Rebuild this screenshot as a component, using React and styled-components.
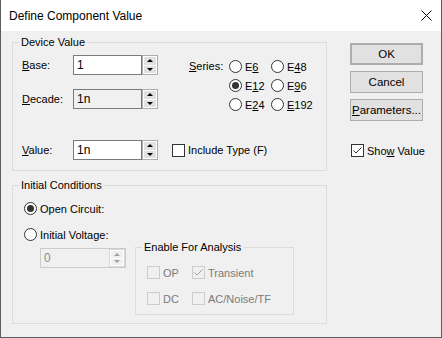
import React from 'react';
import styled, { createGlobalStyle } from 'styled-components';

const GlobalStyle = createGlobalStyle`
  html, body {
    margin: 0;
    padding: 0;
    background: #ffffff;
  }
  body {
    font-family: "Liberation Sans", Arial, sans-serif;
    font-size: 11px;
    color: #000;
  }
`;

const Window = styled.div`
  width: 442px;
  height: 338px;
  box-sizing: border-box;
  border: 1px solid #5e5e5e;
  border-top: none;
  background: #f0f0f0;
  display: flex;
  flex-direction: column;
`;

const TitleBar = styled.div`
  height: 31px;
  flex: none;
  background: #ffffff;
  display: flex;
  align-items: center;
  justify-content: space-between;
  padding: 0 9px 0 8px;
  font-size: 12px;
`;

const Body = styled.div`
  flex: 1;
  display: flex;
`;

const LeftColumn = styled.div`
  width: 315px;
  margin-left: 11px;
  padding-top: 4px;
  display: flex;
  flex-direction: column;
  gap: 7px;
`;

const RightColumn = styled.div`
  width: 73px;
  margin-left: 23px;
  padding-top: 12px;
  display: flex;
  flex-direction: column;
  gap: 6px;
`;

const GroupBox = styled.fieldset`
  margin: 0;
  padding: 0;
  min-width: 0;
  border: 1px solid #dcdcdc;
  box-sizing: border-box;
  height: ${(p) => p.$h}px;
  width: ${(p) => (p.$w ? `${p.$w}px` : 'auto')};
`;

const Legend = styled.legend`
  margin-left: 6px;
  padding: 0 2px;
  line-height: 14px;
  font-size: 11px;
  color: #000;
`;

const DeviceInner = styled.div`
  padding: 6px 0 0 9px;
  display: flex;
  flex-direction: column;
`;

const TopArea = styled.div`
  display: flex;
`;

const FieldStack = styled.div`
  display: flex;
  flex-direction: column;
  gap: 14px;
`;

const Row = styled.div`
  display: flex;
  align-items: center;
  height: 20px;
  margin-top: ${(p) => p.$mt || 0}px;
`;

const Label = styled.span`
  width: ${(p) => p.$w || 51}px;
  flex: none;
`;

const Indent = styled.span`
  width: 16px;
  flex: none;
`;

const Field = styled.div`
  display: flex;
  height: 20px;
  box-sizing: border-box;
  border: ${(p) => (p.$disabled ? '1px solid #cccccc' : 'none')};
  width: ${(p) => (p.$disabled ? '86px' : 'auto')};
`;

const Input = styled.input`
  width: ${(p) => (p.$disabled ? 68 : 69)}px;
  height: ${(p) => (p.$disabled ? 18 : 20)}px;
  box-sizing: border-box;
  margin: 0;
  padding: 0 3px;
  border: ${(p) => (p.$disabled ? 'none' : '1px solid #7a7a7a')};
  background: ${(p) => (p.$grey ? '#f0f0f0' : '#ffffff')};
  font-family: "Liberation Sans", Arial, sans-serif;
  font-size: 12px;
  color: ${(p) => (p.$disabled ? '#8a8a8a' : '#000')};
  outline: none;
`;

const Spinner = styled.div`
  width: 16px;
  height: ${(p) => (p.$disabled ? 18 : 20)}px;
  box-sizing: border-box;
  border: 1px solid ${(p) => (p.$disabled ? '#d6d6d6' : '#adadad')};
  background: #ffffff;
  padding: 1px;
  display: flex;
  flex-direction: column;
  gap: 1px;
`;

const SpinButton = styled.div`
  flex: 1;
  background: ${(p) => (p.$disabled ? '#f0f0f0' : '#e1e1e1')};
  display: flex;
  align-items: center;
  justify-content: center;
`;

const Arrow = styled.span`
  width: 0;
  height: 0;
  border-left: 3px solid transparent;
  border-right: 3px solid transparent;
  border-${(p) => (p.$down ? 'top' : 'bottom')}: 3px solid ${(p) => (p.$disabled ? '#a0a0a0' : '#000')};
`;

const SeriesBlock = styled.div`
  display: flex;
  margin-left: 31px;
  padding-top: 2px;
`;

const SeriesLabel = styled.span`
  width: 40px;
  line-height: 19px;
`;

const RadioGrid = styled.div`
  display: grid;
  grid-template-columns: 42px auto;
  grid-auto-rows: 19px;
`;

const Option = styled.label`
  display: flex;
  align-items: center;
  gap: 3px;
  height: ${(p) => p.$h || 19}px;
  color: ${(p) => (p.$disabled ? '#7a7a7a' : '#000')};
  margin-left: ${(p) => p.$ml || 0}px;
  margin-top: ${(p) => p.$mt || 0}px;
  white-space: nowrap;
`;

const Box = styled.span`
  width: 13px;
  height: 13px;
  flex: none;
  box-sizing: border-box;
  border: 1px solid ${(p) => (p.$disabled ? '#cccccc' : '#333333')};
  background: ${(p) => (p.$disabled ? '#f0f0f0' : '#ffffff')};
  border-radius: ${(p) => (p.$round ? '50%' : '0')};
  display: flex;
  align-items: center;
  justify-content: center;
`;

const Dot = styled.span`
  width: 7px;
  height: 7px;
  border-radius: 50%;
  background: #333333;
`;

const Button = styled.button`
  width: 73px;
  height: 22px;
  box-sizing: border-box;
  margin: 0;
  padding: 0;
  background: #e1e1e1;
  border: ${(p) => (p.$default ? '2px solid #adadad' : '1px solid #adadad')};
  font-family: "Liberation Sans", Arial, sans-serif;
  font-size: 11.5px;
  color: #000;
`;

const ShowValue = styled.div`
  margin-top: 17px;
  margin-left: 1px;
`;

const ICInner = styled.div`
  display: flex;
  padding: 10px 0 0 11px;
`;

const ICLeft = styled.div`
  width: 111px;
  display: flex;
  flex-direction: column;
`;

const ICRight = styled.div`
  margin-top: 38px;
`;

const AnalysisGrid = styled.div`
  display: grid;
  grid-template-columns: 45px auto;
  grid-auto-rows: 13px;
  row-gap: 13px;
  padding: 12px 0 0 11px;
`;

function Check({ color = '#333333' }) {
  return (
    <svg width="11" height="11" viewBox="0 0 11 11">
      <polyline points="1.5,5.5 4,8 9.5,2.5" fill="none" stroke={color} strokeWidth="1" />
    </svg>
  );
}

function SpinField({ value, grey, disabled }) {
  return (
    <Field $disabled={disabled}>
      <Input readOnly value={value} $grey={grey || disabled} $disabled={disabled} />
      <Spinner $disabled={disabled}>
        <SpinButton $disabled={disabled}>
          <Arrow $disabled={disabled} />
        </SpinButton>
        <SpinButton $disabled={disabled}>
          <Arrow $down $disabled={disabled} />
        </SpinButton>
      </Spinner>
    </Field>
  );
}

function Radio({ checked, children, ...rest }) {
  return (
    <Option {...rest}>
      <Box $round>{checked && <Dot />}</Box>
      <span>{children}</span>
    </Option>
  );
}

function CheckBox({ checked, disabled, children, ...rest }) {
  return (
    <Option $disabled={disabled} {...rest}>
      <Box $disabled={disabled}>{checked && <Check color={disabled ? '#a0a0a0' : '#333333'} />}</Box>
      <span>{children}</span>
    </Option>
  );
}

export default function App() {
  return (
    <>
      <GlobalStyle />
      <Window>
        <TitleBar>
          <span>Define Component Value</span>
          <svg width="11" height="11" viewBox="0 0 11 11">
            <path d="M0.5 0.5 L10.5 10.5 M10.5 0.5 L0.5 10.5" stroke="#000" strokeWidth="1" />
          </svg>
        </TitleBar>
        <Body>
          <LeftColumn>
            <GroupBox $h={136}>
              <Legend>Device Value</Legend>
              <DeviceInner>
                <TopArea>
                  <FieldStack>
                    <Row>
                      <Label><u>B</u>ase:</Label>
                      <SpinField value="1" />
                    </Row>
                    <Row>
                      <Label><u>D</u>ecade:</Label>
                      <SpinField value="1n" grey />
                    </Row>
                  </FieldStack>
                  <SeriesBlock>
                    <SeriesLabel><u>S</u>eries:</SeriesLabel>
                    <RadioGrid>
                      <Radio>E<u>6</u></Radio>
                      <Radio>E<u>4</u>8</Radio>
                      <Radio checked>E<u>1</u>2</Radio>
                      <Radio>E<u>9</u>6</Radio>
                      <Radio>E<u>2</u>4</Radio>
                      <Radio><u>E</u>192</Radio>
                    </RadioGrid>
                  </SeriesBlock>
                </TopArea>
                <Row $mt={26}>
                  <Label><u>V</u>alue:</Label>
                  <SpinField value="1n" />
                  <CheckBox $ml={14}>Include Type (F)</CheckBox>
                </Row>
              </DeviceInner>
            </GroupBox>
            <GroupBox $h={146}>
              <Legend>Initial Conditions</Legend>
              <ICInner>
                <ICLeft>
                  <Radio checked $h={13}>Open Circuit:</Radio>
                  <Radio $h={13} $mt={13}>Initial Voltage:</Radio>
                  <Row $mt={7}>
                    <Indent />
                    <SpinField value="0" disabled />
                  </Row>
                </ICLeft>
                <ICRight>
                  <GroupBox $h={75} $w={159}>
                    <Legend>Enable For Analysis</Legend>
                    <AnalysisGrid>
                      <CheckBox disabled $h={13}>OP</CheckBox>
                      <CheckBox disabled checked $h={13}>Transient</CheckBox>
                      <CheckBox disabled $h={13}>DC</CheckBox>
                      <CheckBox disabled $h={13}>AC/Noise/TF</CheckBox>
                    </AnalysisGrid>
                  </GroupBox>
                </ICRight>
              </ICInner>
            </GroupBox>
          </LeftColumn>
          <RightColumn>
            <Button $default>OK</Button>
            <Button>Cancel</Button>
            <Button><u>P</u>arameters...</Button>
            <ShowValue>
              <CheckBox checked $h={13}>Sho<u>w</u> Value</CheckBox>
            </ShowValue>
          </RightColumn>
        </Body>
      </Window>
    </>
  );
}
